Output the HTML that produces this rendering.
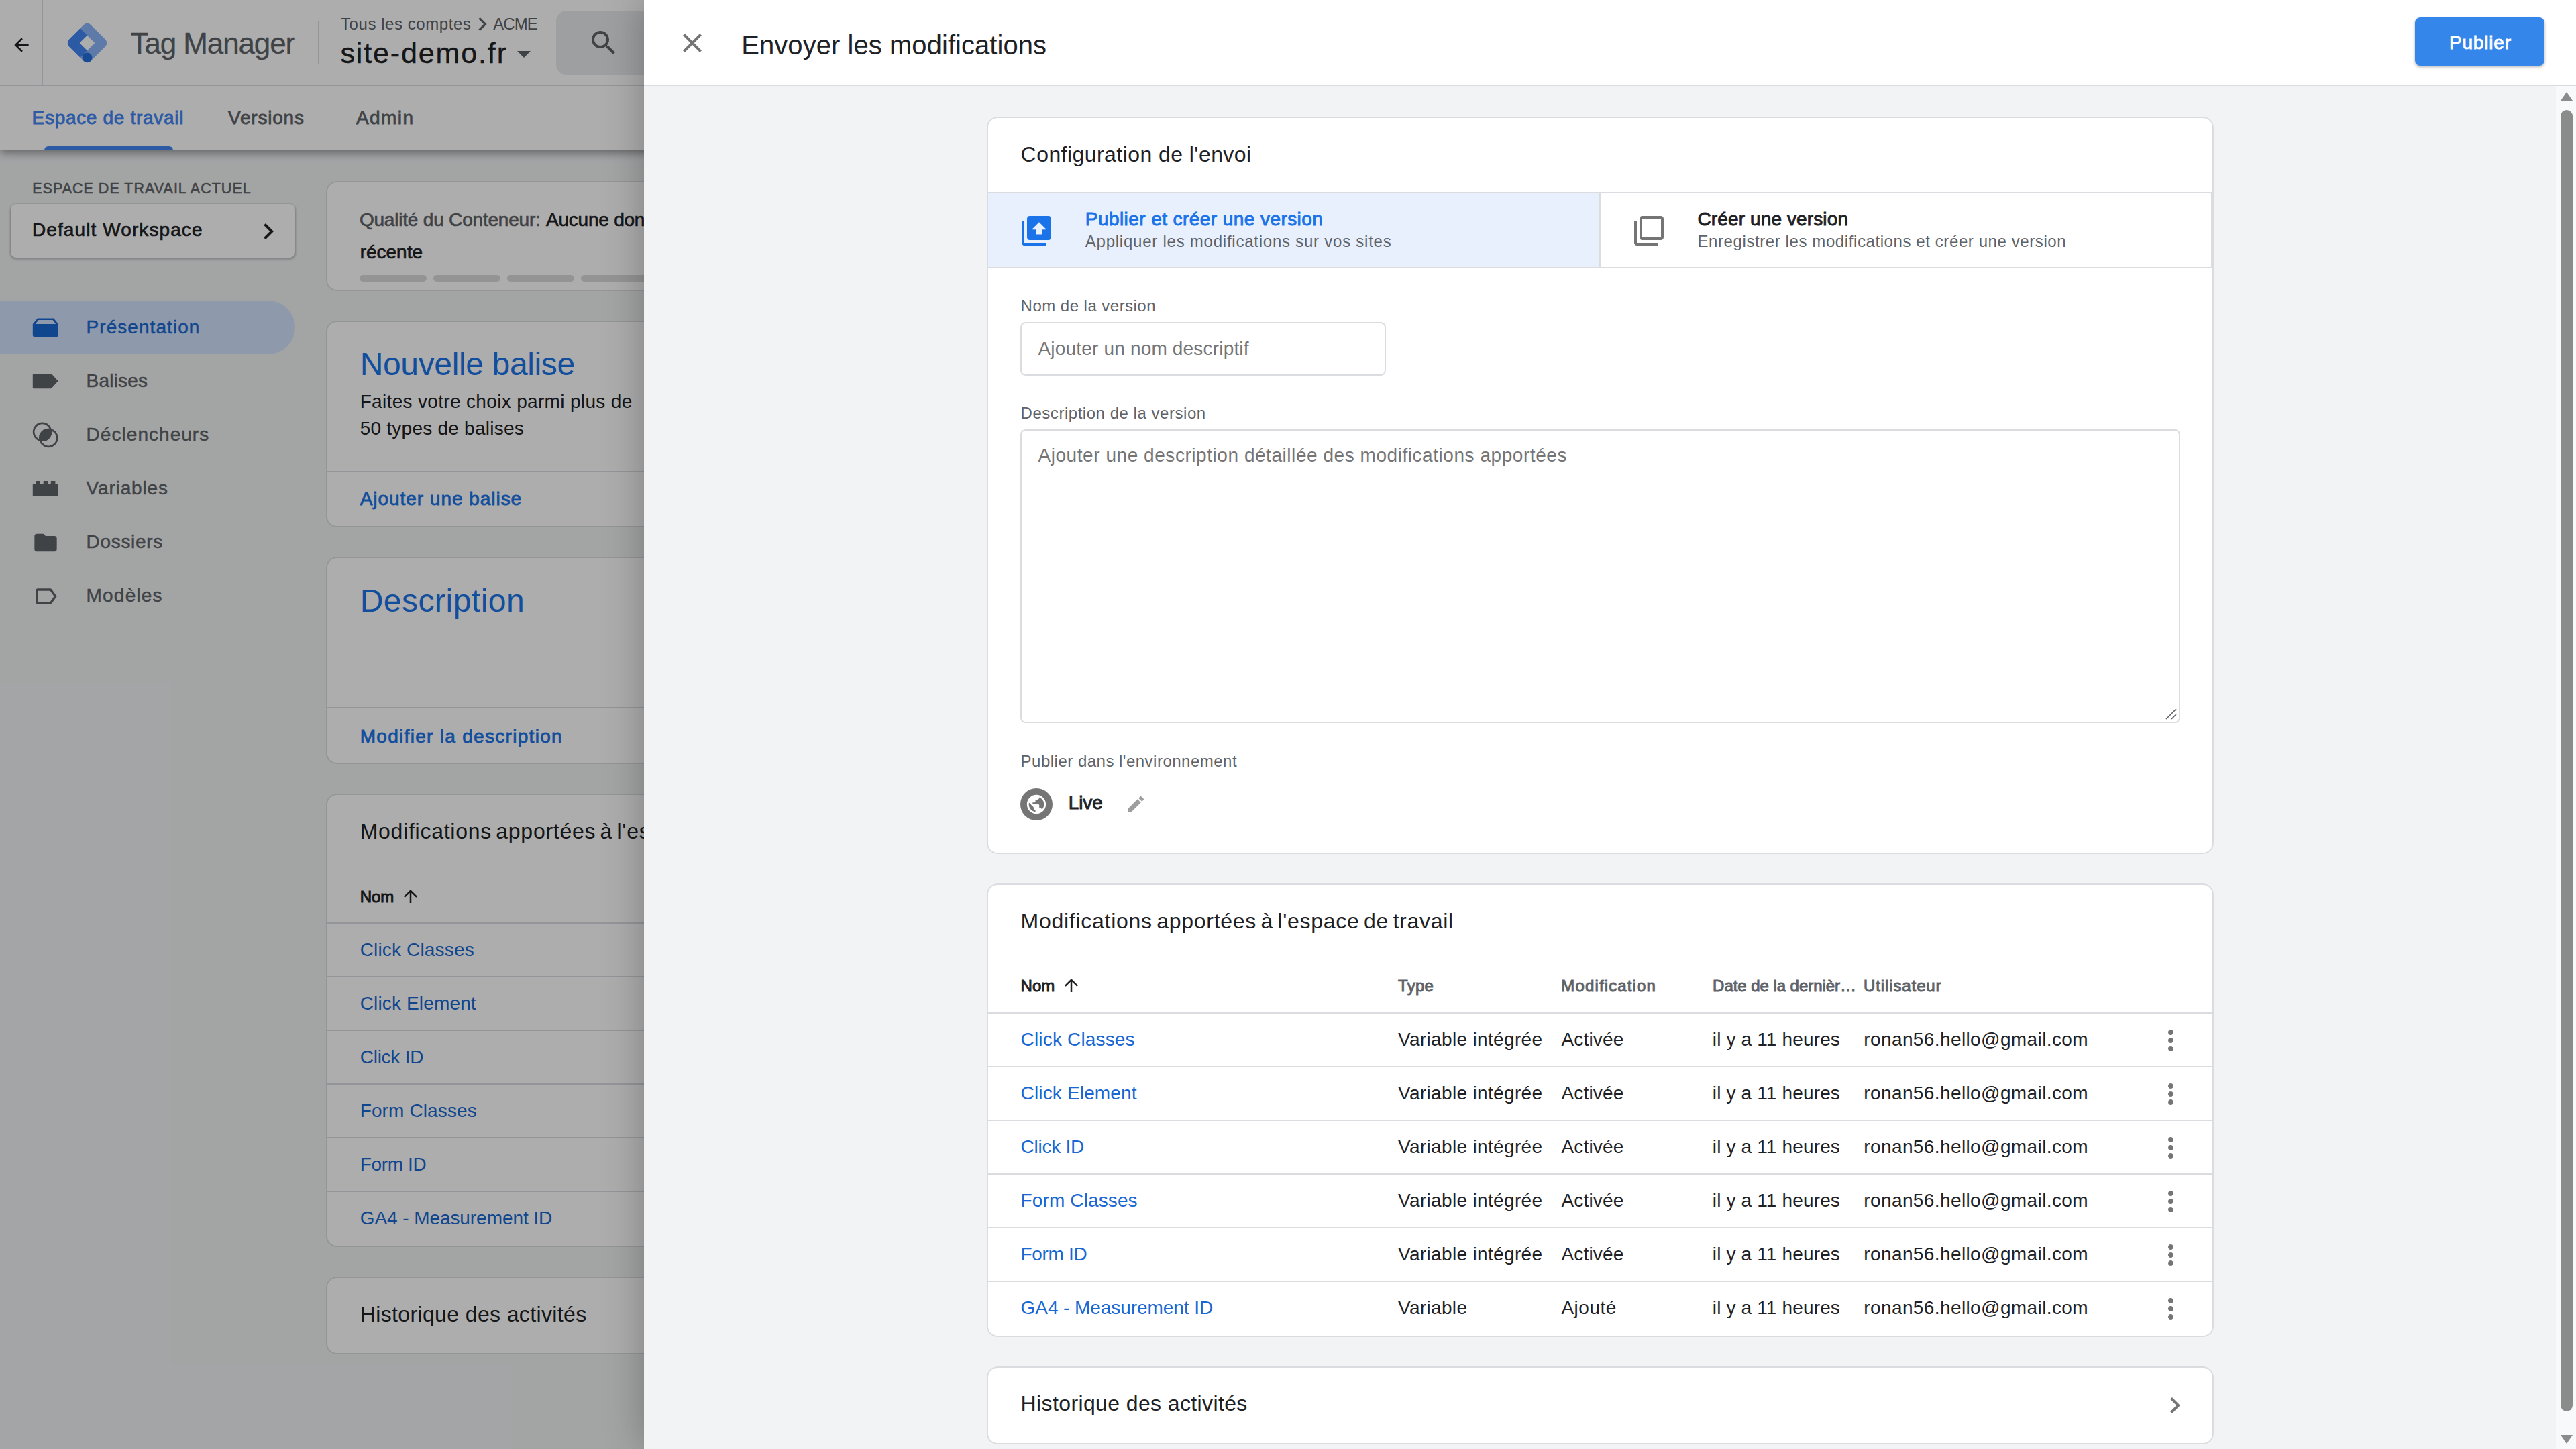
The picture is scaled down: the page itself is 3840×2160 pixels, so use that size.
<!DOCTYPE html>
<html lang="fr">
<head>
<meta charset="utf-8">
<title>Google Tag Manager – Envoyer les modifications</title>
<style>
*{box-sizing:border-box;margin:0;padding:0}
html,body{width:3840px;height:2160px;overflow:hidden;background:#f1f3f4;font-family:"Liberation Sans",sans-serif}
body{position:relative}
.t{position:absolute;line-height:1;white-space:nowrap}
.i{position:absolute;display:block}
ul{list-style:none}
hr{position:absolute;left:0;right:0;height:2px;border:0;background:#dadce0}
.app{z-index:0;position:absolute;left:0;top:0;width:3840px;height:2160px;overflow:hidden;background:#f1f3f4}
.hdr{z-index:2;position:absolute;left:0;top:0;width:3840px;height:128px;background:#fff;border-bottom:2px solid #dadce0}
.back{position:absolute;left:0;top:0;width:64px;height:126px;border-right:2px solid #dadce0}
.vsep{position:absolute;left:474px;top:32px;width:2px;height:64px;background:#dadce0}
.search{position:absolute;left:829px;top:16px;width:1440px;height:96px;border-radius:16px;background:#e8eaed}
.tabs{position:absolute;left:0;top:128px;width:3840px;height:96px;background:#fff;box-shadow:0 3px 14px rgba(0,0,0,.45)}
.tabs .ind{position:absolute;left:66px;bottom:0;width:192px;height:6px;border-radius:6px 6px 0 0;background:#4285f4}
.side{position:absolute;left:0;top:224px;width:456px;height:1936px}
.side .t,.side .ws,.side .nav{position:absolute}
.side>.t{margin-top:-224px}
.ws{left:16px;top:80px;width:424px;height:80px;border-radius:8px;background:#fff;box-shadow:0 2px 4px rgba(0,0,0,.3),0 0 2px rgba(0,0,0,.2)}
.nav{left:0;top:-224px;width:456px}
.nav li{position:absolute;left:0;width:440px;height:80px;border-radius:0 40px 40px 0}
.nav li.on{background:#d2e3fc}
.main{position:absolute;left:486px;top:0;width:3354px;height:2160px}
.card{position:absolute;left:0;width:1829px;background:#fff;border-radius:16px;box-shadow:inset 0 0 0 2px #dadce0}
.main .card{width:2400px}
.card>hr{left:2px;right:2px}
.seg{position:absolute;top:140px;width:100px;height:10px;border-radius:5px;background:#dadada}
.veil{z-index:1;position:absolute;left:0;top:0;width:3840px;height:2160px;background:rgba(0,0,0,.32)}
.sheet{z-index:2;position:absolute;left:960px;top:0;width:2880px;height:2160px;background:#f1f3f4;box-shadow:0 0 56px rgba(0,0,0,.28);overflow:hidden}
.shdr{position:absolute;left:0;top:0;width:2880px;height:128px;background:#fff;border-bottom:2px solid #dadce0}
.btn{position:absolute;left:2640px;top:26px;width:193px;height:72px;border-radius:8px;background:#3486eb;box-shadow:0 2px 4px rgba(0,0,0,.3)}
.sbody{position:absolute;left:0;top:127px;width:2850px;height:2033px}
.sbody .card{left:511px}
.opts{position:absolute;left:2px;top:112px;width:1825px;height:114px;border-top:2px solid #dadce0;border-bottom:2px solid #dadce0}
.opt{position:absolute;top:0;height:110px;border-right:2px solid #dadce0}
.opt.sel{left:0;width:913px;background:#e8f0fe}
.opt.alt{left:913px;width:912px}
.inp{position:absolute;border-radius:8px;background:#fff;box-shadow:inset 0 0 0 2px #dadce0}
.live{position:absolute;width:48px;height:48px;border-radius:50%;background:#757575}
.thead{position:absolute;left:0;top:0;width:1829px;height:192px}
.tr{position:absolute;left:2px;width:1825px;height:80px;border-top:2px solid #dadce0}
.tr>*{margin-left:-2px;margin-top:-2px}
.sbar{position:absolute;left:2850px;top:128px;width:30px;height:2032px;background:#f8f9fa}
.sbar .thumb{position:absolute;left:7px;top:36px;width:18px;height:1940px;border-radius:9px;background:#8b8b8b}
.sbar .up,.sbar .dn{position:absolute;left:7px;width:0;height:0;border-left:9px solid transparent;border-right:9px solid transparent}
.sbar .up{top:9px;border-bottom:13px solid #8b8b8b}
.sbar .dn{bottom:8px;border-top:13px solid #8b8b8b}
</style>
</head>
<body>
<div class="app">
<header class="hdr">
<div class="back"><svg class="i" style="left:16.1px;top:51px" width="32" height="32" viewBox="0 0 24 24" fill="#202124" ><path d="M20 11H7.83l5.59-5.59L12 4l-8 8 8 8 1.41-1.41L7.83 13H20v-2z"/></svg></div>
<svg class="i" style="left:98px;top:31.85px" width="64" height="64" viewBox="0 0 64 64"><g transform="rotate(45 32 32)"><rect x="9.2" y="9.2" width="45.6" height="45.6" rx="7.4" fill="#8ab4f8"/><path d="M9.200 24h14.800v16h16v14.800H16.600a7.400 7.400 0 0 1-7.400-7.400z" fill="#4285f4"/><rect x="24" y="24" width="16" height="16" fill="#fff"/><circle cx="47.4" cy="47.4" r="7.4" fill="#246fdb"/></g></svg><span class="t" style="left:194.6px;top:42.9px;font-size:44px;color:#5f6368;letter-spacing:-1.12px;-webkit-text-stroke:0.3px currentColor;">Tag Manager</span>
<div class="vsep"></div>
<span class="t" style="left:508px;top:23.7px;font-size:24px;color:#5f6368;letter-spacing:0.56px;">Tous les comptes</span><svg class="i" style="left:699px;top:16px" width="40" height="40" viewBox="0 0 24 24" fill="#5f6368" ><path d="M10 6L8.59 7.41 13.17 12l-4.58 4.59L10 18l6-6z"/></svg><span class="t" style="left:735.2px;top:23.7px;font-size:24px;color:#5f6368;letter-spacing:-0.91px;">ACME</span>
<span class="t" style="left:507.5px;top:58.4px;font-size:43px;color:#202124;letter-spacing:1.86px;-webkit-text-stroke:0.4px currentColor;">site-demo.fr</span><svg class="i" style="left:756.5px;top:56px" width="48" height="48" viewBox="0 0 24 24" fill="#5f6368" ><path d="M7 10l5 5 5-5z"/></svg>
<div class="search"><svg class="i" style="left:47.4px;top:24px" width="48" height="48" viewBox="0 0 24 24" fill="#5f6368" ><path d="M15.5 14h-.79l-.28-.27C15.41 12.59 16 11.11 16 9.5 16 5.91 13.09 3 9.5 3S3 5.91 3 9.5 5.91 16 9.5 16c1.61 0 3.09-.59 4.23-1.57l.27.28v.79l5 4.99L20.49 19l-4.99-5zm-6 0C7.01 14 5 11.99 5 9.5S7.01 5 9.5 5 14 7.01 14 9.5 11.99 14 9.5 14z"/></svg></div>
</header>
<nav class="tabs">
<span class="t" style="left:47.6px;top:34.1px;font-size:28px;color:#4285f4;letter-spacing:0.69px;-webkit-text-stroke:0.8px currentColor;">Espace de travail</span><i class="ind"></i><span class="t" style="left:340px;top:34.1px;font-size:28px;color:#5f6368;letter-spacing:0.8px;-webkit-text-stroke:0.8px currentColor;">Versions</span><span class="t" style="left:531px;top:34.1px;font-size:28px;color:#5f6368;letter-spacing:1.41px;-webkit-text-stroke:0.8px currentColor;">Admin</span>
</nav>
<aside class="side">
<span class="t" style="left:48.2px;top:271.1px;font-size:21.5px;color:#5f6368;letter-spacing:1.01px;-webkit-text-stroke:0.6px currentColor;">ESPACE DE TRAVAIL ACTUEL</span><div class="ws"><span class="t" style="left:32px;top:24.8px;font-size:28px;color:#202124;letter-spacing:1.09px;-webkit-text-stroke:0.7px currentColor;">Default Workspace</span><svg class="i" style="left:360px;top:16.6px" width="48" height="48" viewBox="0 0 24 24" fill="#202124" ><path d="M10 6L8.59 7.41 13.17 12l-4.58 4.59L10 18l6-6z"/></svg></div>
<ul class="nav">
<li class="on" style="top:448px;color:#1967d2"><svg class="i" style="left:48px;top:20px" width="40" height="40" viewBox="0 0 40 40" fill="currentColor" ><path fill-rule="evenodd" d="M7.900 6.500H32.100L39 14.900V31.400a2.500 2.500 0 0 1-2.500 2.500H3.300a2.500 2.500 0 0 1-2.500-2.500V14.900zM9.400 9.100L4.700 14.900H35.100L30.600 9.100z"/></svg><span class="t" style="left:128.6px;top:25.7px;font-size:28px;letter-spacing:1.05px;-webkit-text-stroke:0.5px currentColor;">Présentation</span></li>
<li class="" style="top:528px;color:#5f6368"><svg class="i" style="left:48px;top:20px" width="40" height="40" viewBox="0 0 40 40" fill="currentColor" ><path d="M2.300 8.900H27.600a2 2 0 0 1 1.500 .700L38.600 20.100 29.100 30.600a2 2 0 0 1-1.500 .700H2.300a1.500 1.500 0 0 1-1.500-1.500V10.400a1.500 1.500 0 0 1 1.500-1.500z"/></svg><span class="t" style="left:128.6px;top:25.7px;font-size:28px;letter-spacing:0.19px;-webkit-text-stroke:0.5px currentColor;">Balises</span></li>
<li class="" style="top:608px;color:#5f6368"><svg class="i" style="left:48px;top:20px" width="40" height="40" viewBox="0 0 40 40" fill="currentColor" ><circle cx="15.05" cy="15.85" r="12.9" fill="none" stroke="currentColor" stroke-width="2.700"/><circle cx="24.35" cy="24.95" r="12.9" fill="none" stroke="currentColor" stroke-width="2.700"/><path d="M24.350 10.700a14.250 14.250 0 0 1 4.900 5.150 14.250 14.250 0 0 1-14.200 14.250 14.250 14.250 0 0 1-4.900-5.150A14.250 14.250 0 0 1 24.350 10.700z"/></svg><span class="t" style="left:128.6px;top:25.7px;font-size:28px;letter-spacing:1.04px;-webkit-text-stroke:0.5px currentColor;">Déclencheurs</span></li>
<li class="" style="top:688px;color:#5f6368"><svg class="i" style="left:48px;top:20px" width="40" height="40" viewBox="0 0 40 40" fill="currentColor" ><path d="M0.800 14.100H5.500V8.900H12V14.100H16.700V8.900H23.400V14.100H27.800V8.900H34.400V14.100H38.600V30.900H0.800z"/></svg><span class="t" style="left:128.6px;top:25.7px;font-size:28px;letter-spacing:0.84px;-webkit-text-stroke:0.5px currentColor;">Variables</span></li>
<li class="" style="top:768px;color:#5f6368"><svg class="i" style="left:48px;top:21px" width="40" height="40" viewBox="0 0 24 24" fill="currentColor" ><path d="M10 4H4c-1.1 0-1.99.9-1.99 2L2 18c0 1.1.9 2 2 2h16c1.1 0 2-.9 2-2V8c0-1.1-.9-2-2-2h-8l-2-2z"/></svg><span class="t" style="left:128.6px;top:25.7px;font-size:28px;letter-spacing:0.68px;-webkit-text-stroke:0.5px currentColor;">Dossiers</span></li>
<li class="" style="top:848px;color:#5f6368"><svg class="i" style="left:48px;top:21px" width="40" height="40" viewBox="0 0 24 24" fill="currentColor" ><path d="M17.63 5.84C17.27 5.33 16.67 5 16 5L5 5.01C3.9 5.01 3 5.9 3 7v10c0 1.1.9 1.99 2 1.99L16 19c.67 0 1.27-.33 1.63-.84L22 12l-4.37-6.16zM16 17H5V7h11l3.55 5L16 17z"/></svg><span class="t" style="left:128.6px;top:25.7px;font-size:28px;letter-spacing:1.19px;-webkit-text-stroke:0.5px currentColor;">Modèles</span></li>
</ul>
</aside>
<main class="main">
<section class="card" style="top:270px;height:164px"><span class="t" style="left:49.9px;top:43.9px;font-size:28px;color:#5f6368;letter-spacing:-0.2px;-webkit-text-stroke:0.7px currentColor;">Qualité du Conteneur:</span><span class="t" style="left:328px;top:43.9px;font-size:28px;color:#202124;-webkit-text-stroke:0.7px currentColor;letter-spacing:-0.23px;">Aucune donnée</span><span class="t" style="left:50.7px;top:92.3px;font-size:28px;color:#202124;letter-spacing:-0.02px;-webkit-text-stroke:0.7px currentColor;">récente</span><i class="seg" style="left:49.89999999999998px"></i><i class="seg" style="left:159.89999999999998px"></i><i class="seg" style="left:269.9px"></i><i class="seg" style="left:379.9px"></i><i class="seg" style="left:489.9px"></i></section>
<section class="card" style="top:478px;height:308px"><span class="t" style="left:50.7px;top:41.4px;font-size:48px;color:#1a73e8;letter-spacing:-0.36px;">Nouvelle balise</span><span class="t" style="left:50.7px;top:107.1px;font-size:28px;color:#202124;letter-spacing:0.33px;">Faites votre choix parmi plus de</span><span class="t" style="left:50.7px;top:146.6px;font-size:28px;color:#202124;letter-spacing:0.24px;">50 types de balises</span><hr style="top:224px"><span class="t" style="left:50.7px;top:252.1px;font-size:28px;color:#1a73e8;letter-spacing:0.96px;-webkit-text-stroke:0.8px currentColor;">Ajouter une balise</span></section>
<section class="card" style="top:830px;height:309px"><span class="t" style="left:50.7px;top:42.2px;font-size:48px;color:#1a73e8;letter-spacing:0.49px;">Description</span><hr style="top:223.5px"><span class="t" style="left:50.7px;top:253.5px;font-size:28px;color:#1a73e8;letter-spacing:1.3px;-webkit-text-stroke:0.8px currentColor;">Modifier la description</span></section>
<section class="card" style="top:1183px;height:676px"><span class="t" style="left:50.7px;top:39.7px;font-size:32px;color:#202124;letter-spacing:0.73px;word-spacing:-3.25px;">Modifications apportées à l'espace de travail</span><span class="t" style="left:50.7px;top:141.7px;font-size:24px;color:#202124;letter-spacing:-0.04px;-webkit-text-stroke:1px currentColor;">Nom</span><svg class="i" style="left:111.3px;top:137.5px" width="30" height="30" viewBox="0 0 24 24" fill="#202124" ><path d="M4 12l1.41 1.41L11 7.83V20h2V7.83l5.58 5.59L20 12l-8-8-8 8z"/></svg><hr style="top:192px"><span class="t" style="left:50.7px;top:218.5px;font-size:28px;color:#1967d2;letter-spacing:0.16px;">Click Classes</span><hr style="top:272px"><span class="t" style="left:50.7px;top:298.5px;font-size:28px;color:#1967d2;letter-spacing:0.15px;">Click Element</span><hr style="top:352px"><span class="t" style="left:50.7px;top:378.5px;font-size:28px;color:#1967d2;letter-spacing:-0.25px;">Click ID</span><hr style="top:432px"><span class="t" style="left:50.7px;top:458.5px;font-size:28px;color:#1967d2;letter-spacing:0.12px;">Form Classes</span><hr style="top:512px"><span class="t" style="left:50.7px;top:538.5px;font-size:28px;color:#1967d2;letter-spacing:-0.35px;">Form ID</span><hr style="top:592px"><span class="t" style="left:50.7px;top:618.5px;font-size:28px;color:#1967d2;letter-spacing:-0.07px;">GA4 - Measurement ID</span></section>
<section class="card" style="top:1903px;height:116px"><span class="t" style="left:50.7px;top:40.2px;font-size:32px;color:#202124;letter-spacing:0.37px;">Historique des activités</span></section>
</main>
</div>
<div class="veil"></div>
<section class="sheet">
<header class="shdr"><svg class="i" style="left:48px;top:39.7px" width="48" height="48" viewBox="0 0 24 24" fill="#757575" ><path d="M19 6.41L17.59 5 12 10.59 6.41 5 5 6.41 10.59 12 5 17.59 6.41 19 12 13.41 17.59 19 19 17.59 13.41 12z"/></svg><span class="t" style="left:145.3px;top:47.1px;font-size:40px;color:#202124;letter-spacing:0.05px;">Envoyer les modifications</span><div class="btn"><span class="t" style="left:51px;top:23.7px;font-size:28px;color:#fff;letter-spacing:0.8px;-webkit-text-stroke:0.9px currentColor;">Publier</span></div></header>
<div class="sbody">
<section class="card" style="top:47px;height:1099px">
<span class="t" style="left:50.6px;top:40.4px;font-size:32px;color:#202124;letter-spacing:0.44px;">Configuration de l'envoi</span>
<div class="opts"><div class="opt sel"><svg class="i" style="left:47.9px;top:32px" width="48" height="48" viewBox="0 0 24 24" fill="#1a73e8" ><path fill-rule="evenodd" d="M3 5H1v16c0 1.100.900 2 2 2h16v-2H3V5zm18-4H7c-1.100 0-2 .900-2 2v14c0 1.100.900 2 2 2h14c1.100 0 2-.900 2-2V3c0-1.100-.900-2-2-2zM14 5.600l5.500 5.500H16v3.600h-4v-3.600H8.500z"/></svg><span class="t" style="left:144.8px;top:24.5px;font-size:28px;color:#1a73e8;letter-spacing:0.43px;-webkit-text-stroke:0.9px currentColor;">Publier et créer une version</span><span class="t" style="left:144.8px;top:59.5px;font-size:24px;color:#5f6368;letter-spacing:0.76px;">Appliquer les modifications sur vos sites</span></div><div class="opt alt"><svg class="i" style="left:48px;top:32px" width="48" height="48" viewBox="0 0 24 24" fill="#757575" ><path d="M3 5H1v16c0 1.1.9 2 2 2h16v-2H3V5zm18-4H7c-1.1 0-2 .9-2 2v14c0 1.1.9 2 2 2h14c1.1 0 2-.9 2-2V3c0-1.1-.9-2-2-2zm0 16H7V3h14v14z"/></svg><span class="t" style="left:144.5px;top:24.5px;font-size:28px;color:#202124;letter-spacing:0.12px;-webkit-text-stroke:0.9px currentColor;">Créer une version</span><span class="t" style="left:144.5px;top:59.5px;font-size:24px;color:#5f6368;letter-spacing:0.59px;">Enregistrer les modifications et créer une version</span></div></div>
<span class="t" style="left:50.6px;top:269.5px;font-size:24px;color:#5f6368;letter-spacing:0.47px;">Nom de la version</span><div class="inp" style="left:50px;top:306px;width:545px;height:80px"><span class="t" style="left:26.5px;top:26.2px;font-size:28px;color:#757575;letter-spacing:0.18px;">Ajouter un nom descriptif</span></div>
<span class="t" style="left:50.6px;top:429.8px;font-size:24px;color:#5f6368;letter-spacing:0.53px;">Description de la version</span><div class="inp" style="left:50px;top:466px;width:1729px;height:438px"><span class="t" style="left:26.5px;top:24.5px;font-size:28px;color:#757575;letter-spacing:0.55px;">Ajouter une description détaillée des modifications apportées</span><svg class="i" style="right:5px;bottom:5px" width="18" height="18" viewBox="0 0 18 18" stroke="#5f6368" stroke-width="1.600" fill="none"><path d="M2 17L17 2M10 17l7-7"/></svg></div>
<span class="t" style="left:50.6px;top:948.7px;font-size:24px;color:#5f6368;letter-spacing:0.49px;">Publier dans l'environnement</span><div class="live" style="left:50px;top:1001px"><svg class="i" style="left:7px;top:7px" width="34" height="34" viewBox="0 0 24 24" fill="#fff" ><path d="M12 2C6.48 2 2 6.48 2 12s4.48 10 10 10 10-4.48 10-10S17.52 2 12 2zm-1 17.93c-3.95-.49-7-3.85-7-7.93 0-.62.08-1.21.21-1.79L9 15v1c0 1.1.9 2 2 2v1.93zm6.9-2.54c-.26-.81-1-1.39-1.9-1.39h-1v-3c0-.55-.45-1-1-1H8v-2h2c.55 0 1-.45 1-1V7h2c1.1 0 2-.9 2-2v-.41c2.93 1.19 5 4.06 5 7.41 0 2.08-.8 3.97-2.1 5.39z"/></svg></div><span class="t" style="left:121.8px;top:1009.2px;font-size:28px;color:#202124;letter-spacing:-0.12px;-webkit-text-stroke:0.9px currentColor;">Live</span><svg class="i" style="left:205.5px;top:1009.4px" width="32" height="32" viewBox="0 0 24 24" fill="#9e9e9e" ><path d="M3 17.25V21h3.75L17.81 9.94l-3.75-3.75L3 17.25zM20.71 7.04c.39-.39.39-1.02 0-1.41l-2.34-2.34c-.39-.39-1.02-.39-1.41 0l-1.83 1.83 3.75 3.75 1.83-1.83z"/></svg>
</section>
<section class="card" style="top:1190px;height:676px">
<span class="t" style="left:50.6px;top:40.2px;font-size:32px;color:#202124;letter-spacing:0.73px;word-spacing:-3.25px;">Modifications apportées à l'espace de travail</span>
<div class="thead"><span class="t" style="left:50.6px;top:141.4px;font-size:24px;color:#202124;letter-spacing:-0.04px;-webkit-text-stroke:1px currentColor;">Nom</span><svg class="i" style="left:111.2px;top:137.1px" width="30" height="30" viewBox="0 0 24 24" fill="#202124" ><path d="M4 12l1.41 1.41L11 7.83V20h2V7.83l5.58 5.59L20 12l-8-8-8 8z"/></svg><span class="t" style="left:613.1px;top:141.4px;font-size:24px;color:#5f6368;letter-spacing:0.26px;-webkit-text-stroke:1px currentColor;">Type</span><span class="t" style="left:856.3px;top:141.4px;font-size:24px;color:#5f6368;letter-spacing:1.14px;-webkit-text-stroke:1px currentColor;">Modification</span><span class="t" style="left:1082.1px;top:141.4px;font-size:24px;color:#5f6368;letter-spacing:-0.05px;-webkit-text-stroke:1px currentColor;">Date de la dernièr…</span><span class="t" style="left:1307.1px;top:141.4px;font-size:24px;color:#5f6368;letter-spacing:0.88px;-webkit-text-stroke:1px currentColor;">Utilisateur</span></div>
<div class="tr" style="top:192px"><span class="t" style="left:50.6px;top:26.7px;font-size:28px;color:#1967d2;letter-spacing:0.16px;">Click Classes</span><span class="t" style="left:613px;top:26.7px;font-size:28px;color:#202124;letter-spacing:0.34px;">Variable intégrée</span><span class="t" style="left:856.4px;top:26.7px;font-size:28px;color:#202124;letter-spacing:0.2px;">Activée</span><span class="t" style="left:1081.8px;top:26.7px;font-size:28px;color:#202124;letter-spacing:0.15px;">il y a 11 heures</span><span class="t" style="left:1307.3px;top:26.7px;font-size:28px;color:#202124;letter-spacing:0.39px;">ronan56.hello@gmail.com</span><svg class="i" style="left:1741px;top:18px" width="48" height="48" viewBox="0 0 24 24" fill="#757575" ><path d="M12 8c1.1 0 2-.9 2-2s-.9-2-2-2-2 .9-2 2 .9 2 2 2zm0 2c-1.1 0-2 .9-2 2s.9 2 2 2 2-.9 2-2-.9-2-2-2zm0 6c-1.1 0-2 .9-2 2s.9 2 2 2 2-.9 2-2-.9-2-2-2z"/></svg></div>
<div class="tr" style="top:272px"><span class="t" style="left:50.6px;top:26.7px;font-size:28px;color:#1967d2;letter-spacing:0.15px;">Click Element</span><span class="t" style="left:613px;top:26.7px;font-size:28px;color:#202124;letter-spacing:0.34px;">Variable intégrée</span><span class="t" style="left:856.4px;top:26.7px;font-size:28px;color:#202124;letter-spacing:0.2px;">Activée</span><span class="t" style="left:1081.8px;top:26.7px;font-size:28px;color:#202124;letter-spacing:0.15px;">il y a 11 heures</span><span class="t" style="left:1307.3px;top:26.7px;font-size:28px;color:#202124;letter-spacing:0.39px;">ronan56.hello@gmail.com</span><svg class="i" style="left:1741px;top:18px" width="48" height="48" viewBox="0 0 24 24" fill="#757575" ><path d="M12 8c1.1 0 2-.9 2-2s-.9-2-2-2-2 .9-2 2 .9 2 2 2zm0 2c-1.1 0-2 .9-2 2s.9 2 2 2 2-.9 2-2-.9-2-2-2zm0 6c-1.1 0-2 .9-2 2s.9 2 2 2 2-.9 2-2-.9-2-2-2z"/></svg></div>
<div class="tr" style="top:352px"><span class="t" style="left:50.6px;top:26.7px;font-size:28px;color:#1967d2;letter-spacing:-0.25px;">Click ID</span><span class="t" style="left:613px;top:26.7px;font-size:28px;color:#202124;letter-spacing:0.34px;">Variable intégrée</span><span class="t" style="left:856.4px;top:26.7px;font-size:28px;color:#202124;letter-spacing:0.2px;">Activée</span><span class="t" style="left:1081.8px;top:26.7px;font-size:28px;color:#202124;letter-spacing:0.15px;">il y a 11 heures</span><span class="t" style="left:1307.3px;top:26.7px;font-size:28px;color:#202124;letter-spacing:0.39px;">ronan56.hello@gmail.com</span><svg class="i" style="left:1741px;top:18px" width="48" height="48" viewBox="0 0 24 24" fill="#757575" ><path d="M12 8c1.1 0 2-.9 2-2s-.9-2-2-2-2 .9-2 2 .9 2 2 2zm0 2c-1.1 0-2 .9-2 2s.9 2 2 2 2-.9 2-2-.9-2-2-2zm0 6c-1.1 0-2 .9-2 2s.9 2 2 2 2-.9 2-2-.9-2-2-2z"/></svg></div>
<div class="tr" style="top:432px"><span class="t" style="left:50.6px;top:26.7px;font-size:28px;color:#1967d2;letter-spacing:0.12px;">Form Classes</span><span class="t" style="left:613px;top:26.7px;font-size:28px;color:#202124;letter-spacing:0.34px;">Variable intégrée</span><span class="t" style="left:856.4px;top:26.7px;font-size:28px;color:#202124;letter-spacing:0.2px;">Activée</span><span class="t" style="left:1081.8px;top:26.7px;font-size:28px;color:#202124;letter-spacing:0.15px;">il y a 11 heures</span><span class="t" style="left:1307.3px;top:26.7px;font-size:28px;color:#202124;letter-spacing:0.39px;">ronan56.hello@gmail.com</span><svg class="i" style="left:1741px;top:18px" width="48" height="48" viewBox="0 0 24 24" fill="#757575" ><path d="M12 8c1.1 0 2-.9 2-2s-.9-2-2-2-2 .9-2 2 .9 2 2 2zm0 2c-1.1 0-2 .9-2 2s.9 2 2 2 2-.9 2-2-.9-2-2-2zm0 6c-1.1 0-2 .9-2 2s.9 2 2 2 2-.9 2-2-.9-2-2-2z"/></svg></div>
<div class="tr" style="top:512px"><span class="t" style="left:50.6px;top:26.7px;font-size:28px;color:#1967d2;letter-spacing:-0.35px;">Form ID</span><span class="t" style="left:613px;top:26.7px;font-size:28px;color:#202124;letter-spacing:0.34px;">Variable intégrée</span><span class="t" style="left:856.4px;top:26.7px;font-size:28px;color:#202124;letter-spacing:0.2px;">Activée</span><span class="t" style="left:1081.8px;top:26.7px;font-size:28px;color:#202124;letter-spacing:0.15px;">il y a 11 heures</span><span class="t" style="left:1307.3px;top:26.7px;font-size:28px;color:#202124;letter-spacing:0.39px;">ronan56.hello@gmail.com</span><svg class="i" style="left:1741px;top:18px" width="48" height="48" viewBox="0 0 24 24" fill="#757575" ><path d="M12 8c1.1 0 2-.9 2-2s-.9-2-2-2-2 .9-2 2 .9 2 2 2zm0 2c-1.1 0-2 .9-2 2s.9 2 2 2 2-.9 2-2-.9-2-2-2zm0 6c-1.1 0-2 .9-2 2s.9 2 2 2 2-.9 2-2-.9-2-2-2z"/></svg></div>
<div class="tr" style="top:592px"><span class="t" style="left:50.6px;top:26.7px;font-size:28px;color:#1967d2;letter-spacing:-0.07px;">GA4 - Measurement ID</span><span class="t" style="left:613px;top:26.7px;font-size:28px;color:#202124;letter-spacing:0.33px;">Variable</span><span class="t" style="left:856.4px;top:26.7px;font-size:28px;color:#202124;letter-spacing:0.52px;">Ajouté</span><span class="t" style="left:1081.8px;top:26.7px;font-size:28px;color:#202124;letter-spacing:0.15px;">il y a 11 heures</span><span class="t" style="left:1307.3px;top:26.7px;font-size:28px;color:#202124;letter-spacing:0.39px;">ronan56.hello@gmail.com</span><svg class="i" style="left:1741px;top:18px" width="48" height="48" viewBox="0 0 24 24" fill="#757575" ><path d="M12 8c1.1 0 2-.9 2-2s-.9-2-2-2-2 .9-2 2 .9 2 2 2zm0 2c-1.1 0-2 .9-2 2s.9 2 2 2 2-.9 2-2-.9-2-2-2zm0 6c-1.1 0-2 .9-2 2s.9 2 2 2 2-.9 2-2-.9-2-2-2z"/></svg></div>
</section>
<section class="card" style="top:1910px;height:116px">
<span class="t" style="left:50.6px;top:38.9px;font-size:32px;color:#202124;letter-spacing:0.38px;">Historique des activités</span><svg class="i" style="left:1747px;top:34px" width="48" height="48" viewBox="0 0 24 24" fill="#757575" ><path d="M10 6L8.59 7.41 13.17 12l-4.58 4.59L10 18l6-6z"/></svg></section>
</div>
<div class="sbar"><i class="up"></i><i class="thumb"></i><i class="dn"></i></div>
</section>
</body>
</html>
